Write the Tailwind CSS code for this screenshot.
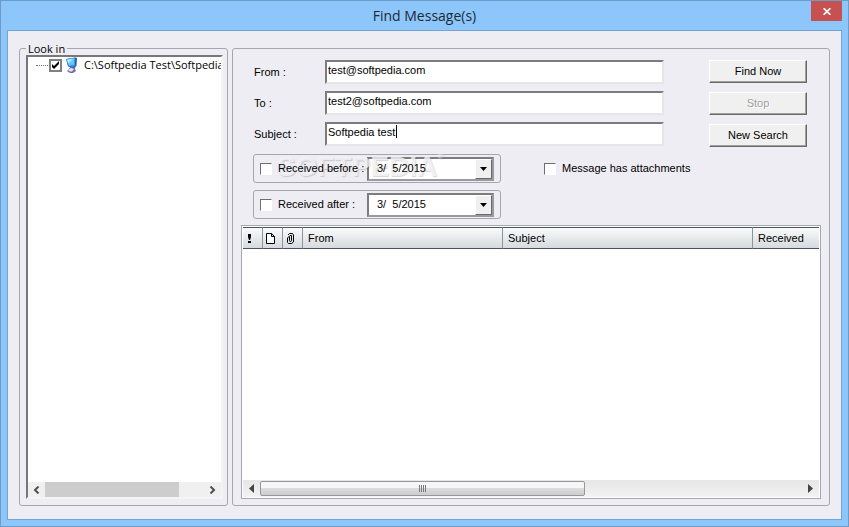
<!DOCTYPE html>
<html lang="en">
<head>
    <meta charset="UTF-8">
    <meta name="viewport" content="width=device-width, initial-scale=1.0">
    <title>Find Message(s)</title>
    <script src="https://cdn.jsdelivr.net/npm/@tailwindcss/browser@4"></script>
</head>
<body class="bg-[#8cc6fa] text-black text-[11px] font-['Liberation_Sans',Arial,sans-serif]">
    <div class="min-h-screen flex flex-col border border-[#6c9bc8] px-[6px] pb-[6px]">

        <!-- Title bar -->
        <header class="relative h-[29px] shrink-0 flex items-center justify-center">
            <h1 class="text-[14px] leading-5 text-[#1c2a38] font-['Open_Sans','Noto_Sans',sans-serif]">Find Message(s)</h1>
            <button type="button" aria-label="Close" class="absolute right-0 top-0 w-[31px] h-5 bg-[#c75050] flex items-center justify-center">
                <svg class="w-2 h-[7px]" viewBox="0 0 8 7" fill="none" stroke="#fff" stroke-width="1.7"><path d="M.6.2 7.4 6.8M7.4.2.6 6.8"/></svg>
            </button>
        </header>

        <main class="flex-1 flex gap-1 border border-[#72a5d6] bg-[#eeedf3] px-[11px] pt-[11px] pb-[13px]">

            <!-- Folder tree -->
            <fieldset class="w-[209px] min-w-0 shrink-0 flex flex-col border border-[#a5a7ad] rounded-[3px] pl-[6px] pr-1 pb-[6px]">
                <legend class="px-[2px] leading-[13px] font-['Open_Sans','Noto_Sans',sans-serif]">Look in</legend>
                <div class="flex-1 min-w-0 flex flex-col bg-white border-2 border-t-[#77777b] border-l-[#77777b] border-r-[#f4f4f6] border-b-[#f4f4f6]">
                    <div class="flex-1 overflow-hidden">
                        <label class="flex items-center h-4 pl-2 whitespace-nowrap font-['Open_Sans','Noto_Sans',sans-serif]">
                            <span class="w-3 shrink-0 border-t border-dotted border-gray-500 mr-px"></span>
                            <span class="relative w-[13px] h-[13px] shrink-0">
                                <input type="checkbox" checked class="block appearance-none w-[13px] h-[13px] border-2 border-[#808080] bg-white">
                                <svg class="absolute inset-0 w-[13px] h-[13px]" viewBox="0 0 13 13"><path d="M3 5v3l2 2 5-5V2L5 7z" fill="#000"/></svg>
                            </span>
                            <svg class="w-4 h-4 shrink-0 ml-[2px] mr-1" viewBox="0 0 16 16">
                                <path d="M5 12l2-3 5-1-1 4 1 2-3 2H6l-3-2z" fill="#6f70a6"/>
                                <path d="M4 13l3-2 3 1-2 2.500H6z" fill="#e4e4f2"/>
                                <path d="M2 2 11.500.5 13 1l-.5 8-3.500 1.500L4 9.500z" fill="#2c5cb8"/>
                                <path d="M2 2 11 .8 11 8.500 8.500 9.800 4.500 9z" fill="#3d96e6"/>
                                <path d="M3 2.600 10 1.600 10 7.600 5 8.400z" fill="#5fccfa"/>
                                <path d="M3 2.600 9 1.700 4.200 6.500z" fill="#b0ecff"/>
                            </svg>
                            <span>C:\Softpedia Test\Softpedia</span>
                        </label>
                    </div>
                    <div class="flex items-center h-[15px] bg-[#f0f0f0]">
                        <div class="w-[17px] flex justify-center">
                            <svg class="w-[7px] h-2" viewBox="0 0 7 8" fill="none" stroke="#505050" stroke-width="2"><path d="M5.500.5 2 4l3.500 3.500"/></svg>
                        </div>
                        <div class="flex-1 h-full"><div class="w-[84%] h-full bg-[#cdcdcd]"></div></div>
                        <div class="w-[17px] flex justify-center">
                            <svg class="w-[7px] h-2" viewBox="0 0 7 8" fill="none" stroke="#505050" stroke-width="2"><path d="M1.500.5 5 4 1.500 7.500"/></svg>
                        </div>
                    </div>
                </div>
            </fieldset>

            <!-- Search form and results -->
            <section class="flex-1 min-w-0 mt-[6px] flex flex-col border border-[#a5a7ad] rounded-[3px] px-2 pt-[11px] pb-[6px]">
                <div class="flex gap-[45px] pl-[13px] pr-[14px]">
                    <div class="flex-1 flex flex-col gap-[7px]">
                        <div class="flex items-center">
                            <label for="from" class="w-[71px]">From :</label>
                            <input id="from" type="text" value="test@softpedia.com" class="flex-1 min-w-0 h-6 px-px pb-1 bg-white border-2 border-t-[#7c7c80] border-l-[#7c7c80] border-r-[#e6e6ea] border-b-[#e6e6ea] outline-none">
                        </div>
                        <div class="flex items-center">
                            <label for="to" class="w-[71px]">To :</label>
                            <input id="to" type="text" value="test2@softpedia.com" class="flex-1 min-w-0 h-6 px-px pb-1 bg-white border-2 border-t-[#7c7c80] border-l-[#7c7c80] border-r-[#e6e6ea] border-b-[#e6e6ea] outline-none">
                        </div>
                        <div class="flex items-center">
                            <label for="subject" class="w-[71px]">Subject :</label>
                            <div class="relative flex-1 flex">
                                <input id="subject" type="text" value="Softpedia test" class="flex-1 min-w-0 h-6 px-px pb-1 bg-white border-2 border-t-[#7c7c80] border-l-[#7c7c80] border-r-[#e6e6ea] border-b-[#e6e6ea] outline-none">
                                <span class="absolute left-[71px] top-[3px] w-px h-[13px] bg-black"></span>
                            </div>
                        </div>
                    </div>
                    <div class="w-[98px] flex flex-col gap-[9px]">
                        <button type="button" class="h-[23px] bg-[#f0f0f0] border border-t-white border-l-white border-r-[#696969] border-b-[#696969] shadow-[inset_-1px_-1px_0_#a0a0a0]">Find Now</button>
                        <button type="button" disabled class="h-[23px] bg-[#f0f0f0] border border-t-white border-l-white border-r-[#696969] border-b-[#696969] shadow-[inset_-1px_-1px_0_#a0a0a0] text-[#a0a0a0] text-shadow-[1px_1px_0_#fff]">Stop</button>
                        <button type="button" class="h-[23px] bg-[#f0f0f0] border border-t-white border-l-white border-r-[#696969] border-b-[#696969] shadow-[inset_-1px_-1px_0_#a0a0a0]">New Search</button>
                    </div>
                </div>

                <div class="relative flex flex-col gap-[7px] pl-3 mt-[7px]">
                    <div class="flex items-center gap-[43px]">
                        <div class="flex items-center w-[248px] h-[29px] border border-[#a5a7ad] rounded-[3px] pl-[6px]">
                            <label class="relative z-10 flex items-center gap-[6px] w-[107px] whitespace-nowrap">
                                <input type="checkbox" class="appearance-none w-3 h-3 bg-white border border-t-[#6f6f73] border-l-[#6f6f73] border-r-white border-b-white">
                                Received before :
                            </label>
                            <div class="flex w-[127px] h-6 bg-white border-2 border-t-[#7c7c80] border-l-[#7c7c80] border-r-[#9a9aa0] border-b-[#9a9aa0]">
                                <input type="text" aria-label="Received before date" value="3/  5/2015" class="relative z-10 bg-transparent flex-1 min-w-0 pl-2 outline-none">
                                <button type="button" aria-label="Pick date" class="w-[17px] bg-[#f0f0f0] border border-t-white border-l-white border-r-[#696969] border-b-[#696969] flex items-center justify-center">
                                    <svg class="w-[7px] h-1" viewBox="0 0 7 4"><path d="M0 0h7L3.500 4z"/></svg>
                                </button>
                            </div>
                        </div>
                        <label class="flex items-center gap-[6px]">
                            <input type="checkbox" class="appearance-none w-3 h-3 bg-white border border-t-[#6f6f73] border-l-[#6f6f73] border-r-white border-b-white">
                            Message has attachments
                        </label>
                    </div>
                    <div class="flex items-center w-[248px] h-[29px] border border-[#a5a7ad] rounded-[3px] pl-[6px]">
                        <label class="flex items-center gap-[6px] w-[107px] whitespace-nowrap">
                            <input type="checkbox" class="appearance-none w-3 h-3 bg-white border border-t-[#6f6f73] border-l-[#6f6f73] border-r-white border-b-white">
                            Received after :
                        </label>
                        <div class="flex w-[127px] h-6 bg-white border-2 border-t-[#7c7c80] border-l-[#7c7c80] border-r-[#9a9aa0] border-b-[#9a9aa0]">
                            <input type="text" aria-label="Received after date" value="3/  5/2015" class="flex-1 min-w-0 pl-2 outline-none">
                            <button type="button" aria-label="Pick date" class="w-[17px] bg-[#f0f0f0] border border-t-white border-l-white border-r-[#696969] border-b-[#696969] flex items-center justify-center">
                                <svg class="w-[7px] h-1" viewBox="0 0 7 4"><path d="M0 0h7L3.500 4z"/></svg>
                            </button>
                        </div>
                    </div>
                    <!-- Watermark, below the label and date text -->
                    <div class="absolute z-0 left-9 -top-[1px] flex items-start pointer-events-none font-bold text-[28px] leading-7 text-[#f7f7fa]/80 text-shadow-[1px_1px_1px_#00000028]">SOFTPEDIA<span class="text-[8px] leading-[8px]">®</span></div>
                </div>

                <div class="flex-1 mt-[6px] flex flex-col bg-white border border-[#a5a7ad] p-px">
                    <div class="flex-1">
                        <table class="w-full table-fixed border-separate border-spacing-0">
                            <thead>
                                <tr class="h-[22px] text-left bg-linear-to-b from-[#fbfcfc] to-[#d5d9dc]">
                                    <th class="w-5 border-y border-r border-y-[#4c5460] border-r-[#8794a4]">
                                        <svg class="w-[5px] h-[9px] ml-1" viewBox="0 0 5 9"><path d="M1 0h3v3L3 6H2L1 3zM1 7h3v2H1z"/></svg>
                                    </th>
                                    <th class="w-5 border-y border-r border-y-[#4c5460] border-r-[#8794a4]">
                                        <svg class="w-[9px] h-[11px] ml-[3px]" viewBox="0 0 9 11" fill="#fff" stroke="#000"><path d="M.5.5h5l3 3v7h-8zM5.500.5v3h3"/></svg>
                                    </th>
                                    <th class="w-5 border-y border-r border-y-[#4c5460] border-r-[#8794a4]">
                                        <svg class="w-[7px] h-[11px] ml-1" viewBox="0 0 7 11" fill="none" stroke="#000"><path d="M2.500 3.500v4q0 1 1 1t1-1v-5h-1.500l-2.500 2.500v4.500l1 1h3l2-1.500V2L5.500.5h-3L1 2"/></svg>
                                    </th>
                                    <th class="w-[200px] border-y border-r border-y-[#4c5460] border-r-[#8794a4] font-normal pl-[5px]">From</th>
                                    <th class="w-[250px] border-y border-r border-y-[#4c5460] border-r-[#8794a4] font-normal pl-[5px]">Subject</th>
                                    <th class="border-y border-[#4c5460] font-normal pl-[5px]">Received</th>
                                </tr>
                            </thead>
                        </table>
                    </div>
                    <div class="flex items-center h-[17px] bg-linear-to-b from-[#e6e6e6] to-[#f2f2f2]">
                        <div class="w-[17px] flex justify-center">
                            <svg class="w-[5px] h-[9px]" viewBox="0 0 5 9" fill="#444"><path d="M5 0v9L0 4.500z"/></svg>
                        </div>
                        <div class="flex-1 h-full">
                            <div class="w-[60%] h-[15px] mt-px flex items-center justify-center gap-px border border-[#97979b] rounded-[2px] bg-linear-to-b from-[#f6f6f6] from-50% via-[#dcdcde] via-50% to-[#cdcdd0]">
                                <span class="w-px h-[7px] bg-[#777]"></span>
                                <span class="w-px h-[7px] bg-[#777]"></span>
                                <span class="w-px h-[7px] bg-[#777]"></span>
                                <span class="w-px h-[7px] bg-[#777]"></span>
                            </div>
                        </div>
                        <div class="w-[17px] flex justify-center">
                            <svg class="w-[5px] h-[9px]" viewBox="0 0 5 9" fill="#444"><path d="M0 0v9l5-4.500z"/></svg>
                        </div>
                    </div>
                </div>
            </section>
        </main>
    </div>
</body>
</html>
